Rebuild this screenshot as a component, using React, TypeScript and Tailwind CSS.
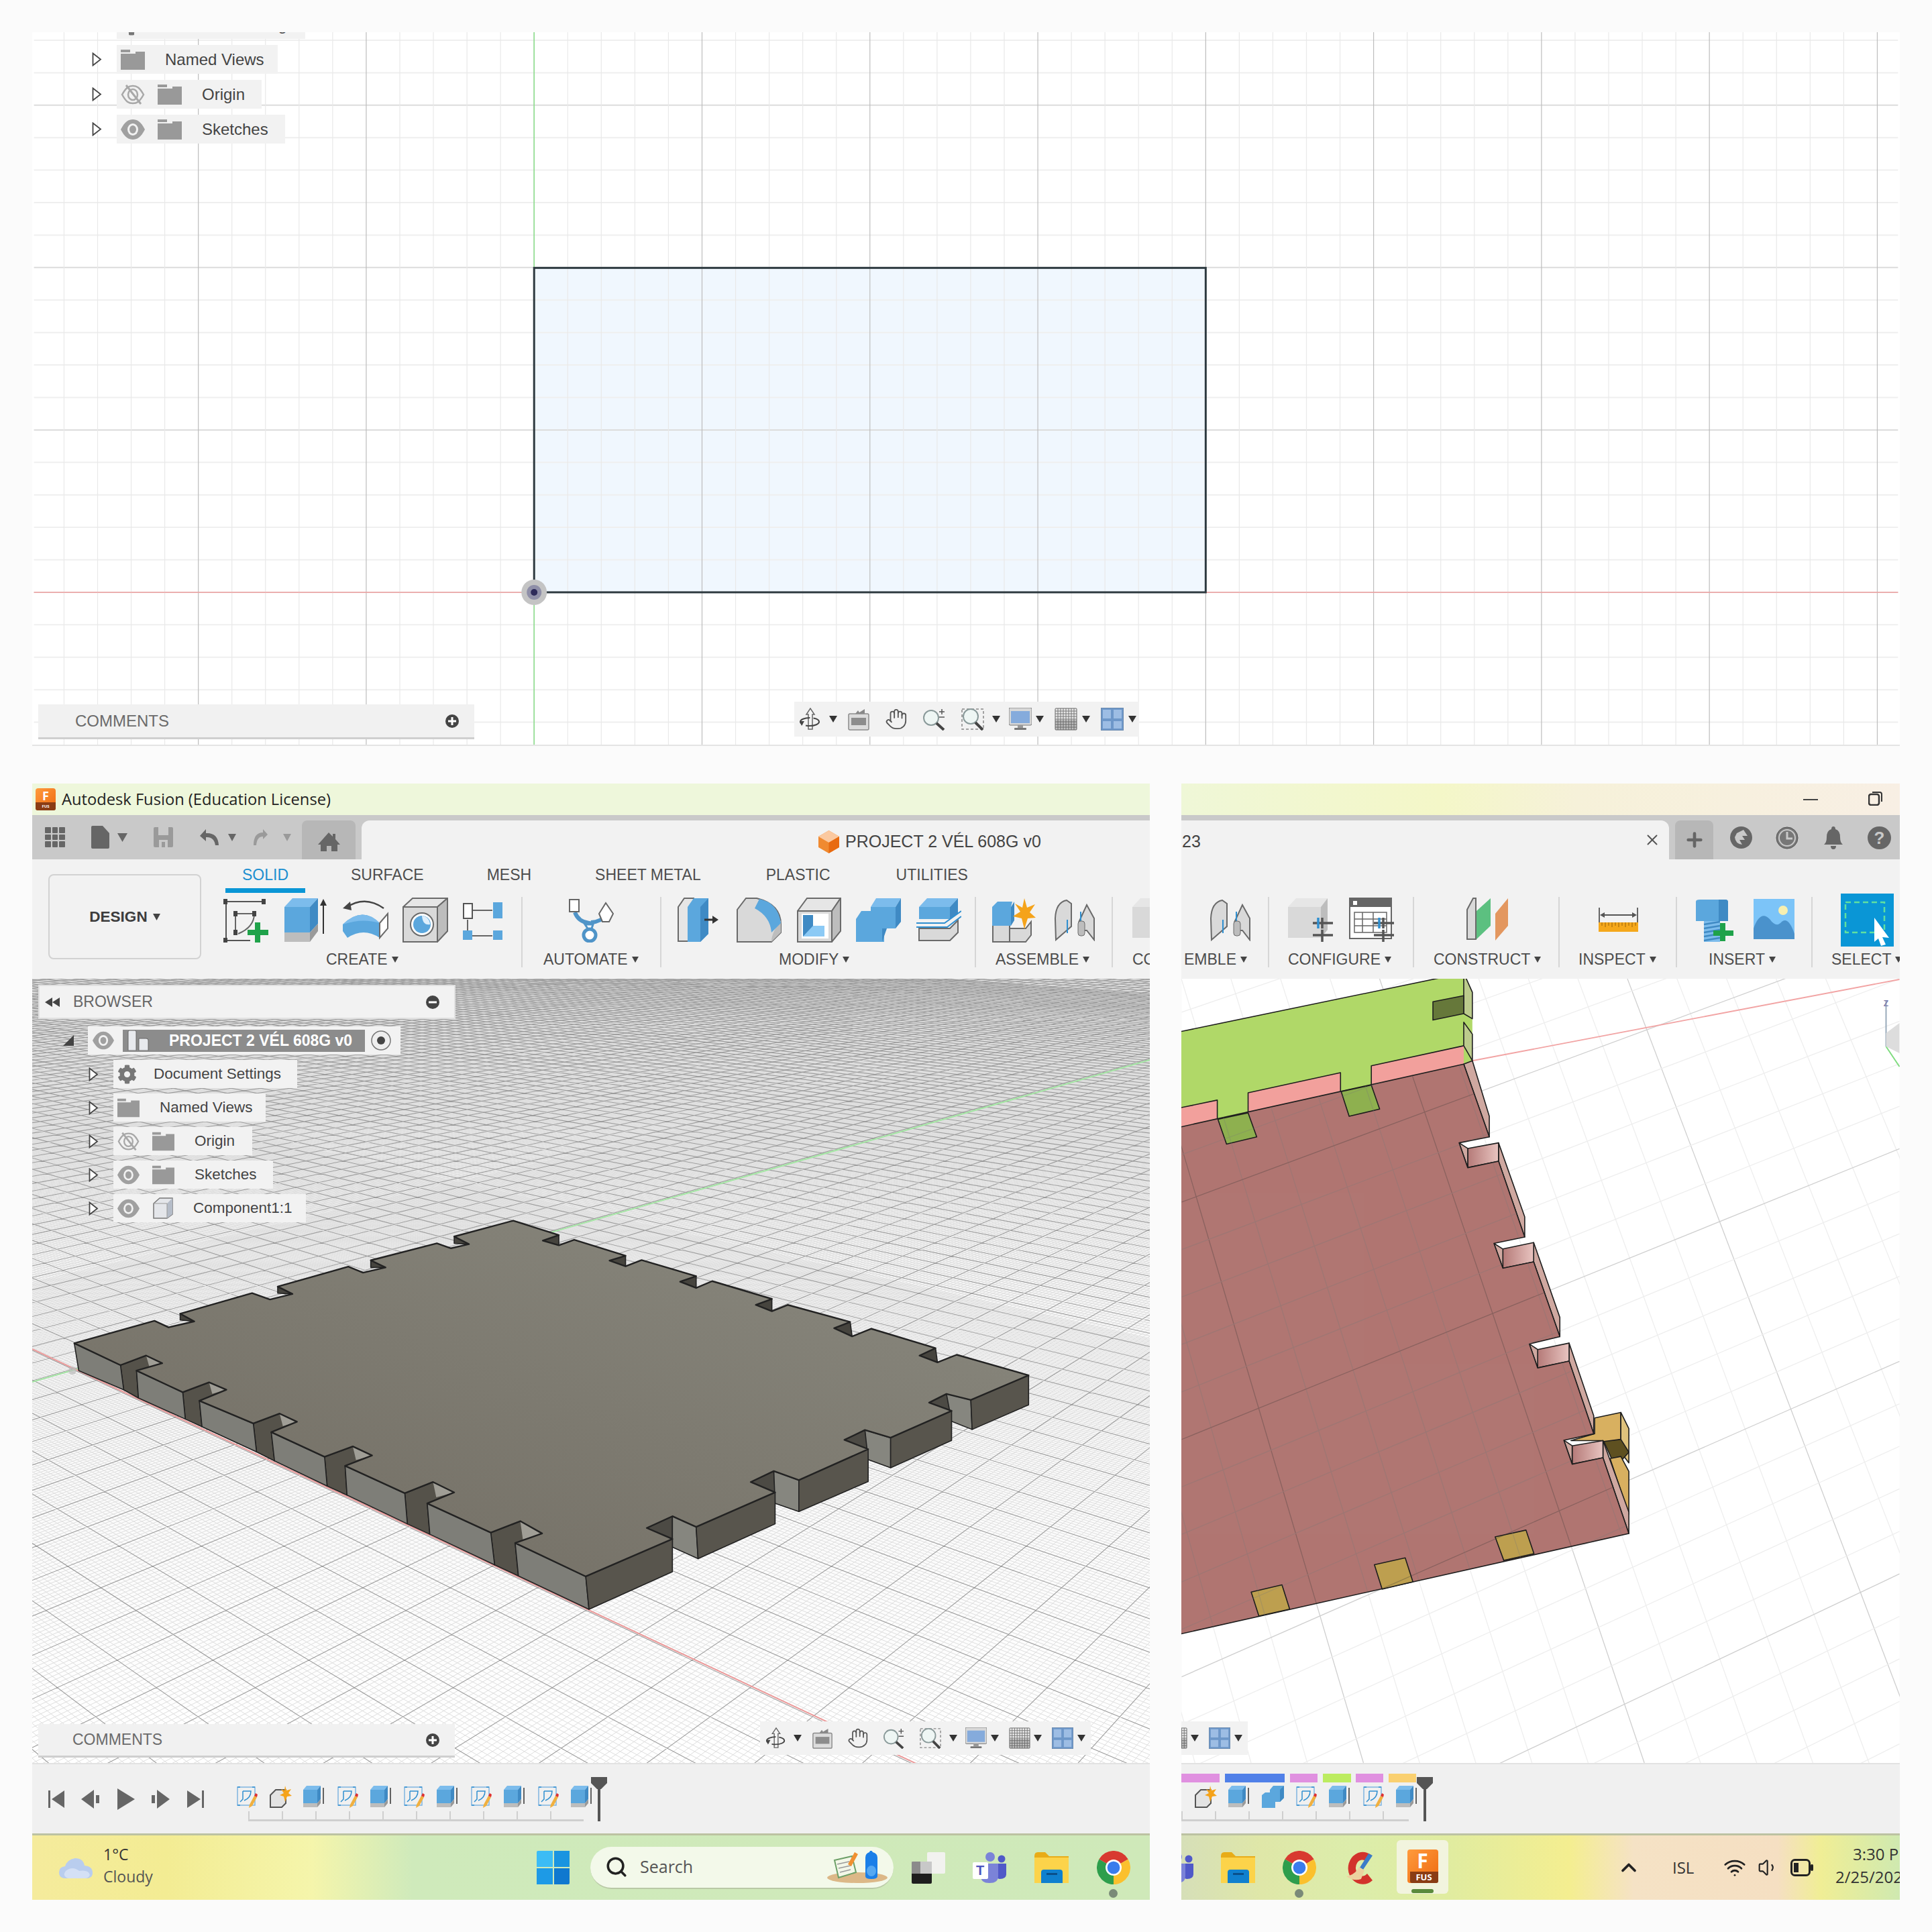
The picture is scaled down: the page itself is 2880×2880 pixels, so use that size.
import React from "react";
import { FaCog } from "react-icons/fa";
import { Hand, Search, ChevronUp, Wifi, Volume1, X, Plus } from "lucide-react";

type CP = { className?: string };
const Ic = ({ w, h, vb, className, children }: { w: number; h: number; vb?: string; className?: string; children?: React.ReactNode }) => (
  <svg width={w} height={h} viewBox={vb ?? `0 0 ${w} ${h}`} className={`shrink-0 ${className ?? ""}`}>{children}</svg>
);
const B1 = "#7cbcec", B2 = "#5ba7dd", B3 = "#3f8ac4", G1 = "#e6e6e6", G2 = "#d9d9d9", G3 = "#bdbdbd", L = "#6a6a6a";

const Caret = ({ w = 12, h = 10, c = "#333", className }: { w?: number; h?: number; c?: string; className?: string }) => (
  <svg width={w} height={h} viewBox="0 0 12 10" preserveAspectRatio="none" className={`shrink-0 ${className ?? ""}`}><path d="M0 0H12L6 10Z" fill={c} /></svg>
);

/* ---------- ribbon icons ---------- */
const SketchIc = () => (
  <Ic w={67} h={67}>
    <g stroke="#555" strokeWidth="2" fill="none">
      <path d="M3 6H60M4 6V64M4 64H40" />
      <path d="M18 24V50M18 24H46M46 24Q46 44 22 54" stroke="#666" />
    </g>
    <g fill="#444">
      <rect x="0" y="2" width="6" height="8" /><rect x="57" y="2" width="6" height="8" /><rect x="0" y="60" width="6" height="8" />
      <rect x="15" y="20" width="6" height="8" /><rect x="43" y="20" width="6" height="8" /><rect x="15" y="48" width="6" height="8" />
    </g>
    <path d="M47 37h8v11h12v8H55v11h-8V56H36v-8h11z" fill="#1fa24a" />
  </Ic>
);
const ExtrudeIc = () => (
  <Ic w={64} h={67}>
    <path d="M0 14 12 1H50L38 14Z" fill={B1} />
    <path d="M0 14H38V52H0Z" fill={B2} />
    <path d="M38 14 50 1V39L38 52Z" fill={B3} />
    <path d="M0 52H38V66H0Z" fill={G3} />
    <path d="M38 52 50 39V50L38 66Z" fill="#9a9a9a" />
    <path d="M58 6V54" stroke="#333" strokeWidth="2" />
    <path d="M58 2 53 12H63Z" fill="#333" />
  </Ic>
);
const RevolveIc = () => (
  <Ic w={69} h={67}>
    <path d="M6 15Q34 -4 62 16" stroke="#444" strokeWidth="2.5" fill="none" />
    <path d="M1 16 12 6 14 19Z" fill="#444" />
    <path d="M1 40Q30 12 56 38L56 60Q32 44 8 60L1 50Z" fill={B2} />
    <path d="M1 40Q30 30 56 38Q30 12 1 40Z" fill={B1} />
    <path d="M56 38 68 24V46L56 60Z" fill="#fff" stroke={L} strokeWidth="2" />
  </Ic>
);
const HoleIc = () => (
  <Ic w={68} h={67}>
    <path d="M1 14 15 1H67L52 14Z" fill={G1} stroke={L} strokeWidth="2" />
    <path d="M1 14H52V66H1Z" fill={G2} stroke={L} strokeWidth="2" />
    <path d="M52 14 67 1V50L52 66Z" fill={G3} stroke={L} strokeWidth="2" />
    <circle cx="29" cy="40" r="17" fill="#fff" stroke={L} strokeWidth="2" />
    <circle cx="29" cy="40" r="13" fill={B2} />
    <path d="M29 27A13 13 0 0 1 41 40Q30 42 29 27Z" fill="#dfeffb" />
  </Ic>
);
const PatternIc = () => (
  <Ic w={59} h={60}>
    <path d="M14 16H44M7 30V46M14 54H44" stroke="#666" strokeWidth="2" />
    <rect x="1" y="6" width="13" height="22" fill="#fff" stroke="#555" strokeWidth="2" />
    <rect x="45" y="4" width="14" height="24" fill={B2} />
    <rect x="0" y="46" width="14" height="14" fill={B2} />
    <rect x="45" y="46" width="14" height="14" fill={B2} />
  </Ic>
);
const AutomateIc = () => (
  <Ic w={67} h={67}>
    <path d="M9 22Q14 36 30 38L32 58M56 26Q48 36 33 37" stroke="#4f94c8" strokeWidth="6" fill="none" />
    <path d="M24 40L32 52 36 40Z" fill="#fff" stroke="#4f94c8" strokeWidth="3" />
    <rect x="1" y="3" width="14" height="18" fill="#fff" stroke="#666" strokeWidth="2" />
    <path d="M55 8 66 24 60 36H50L45 24Z" fill="#fff" stroke="#666" strokeWidth="2" />
    <circle cx="31" cy="56" r="9" fill="#fff" stroke="#4f94c8" strokeWidth="5" />
  </Ic>
);
const PressIc = () => (
  <Ic w={61} h={67}>
    <path d="M10 1 1 14V65H24V1Z" fill={G1} stroke={L} strokeWidth="2" />
    <path d="M15 14 24 1H46V54L34 66H15Z" fill={B2} />
    <path d="M34 66V14L46 1V54Z" fill={B3} />
    <path d="M40 33H56" stroke="#333" strokeWidth="3" />
    <path d="M61 33 52 27V39Z" fill="#333" />
  </Ic>
);
const FilletIc = () => (
  <Ic w={67} h={67}>
    <path d="M1 66V18L14 1H30Q66 10 66 40V52L52 66Z" fill={G2} stroke={L} strokeWidth="2" />
    <path d="M52 66Q52 52 66 34V52Z" fill={G3} />
    <path d="M27 16 34 2Q62 8 66 38L52 52Q50 28 27 16Z" fill={B2} />
  </Ic>
);
const ShellIc = () => (
  <Ic w={66} h={67}>
    <path d="M1 20 15 1H65L52 20Z" fill={G1} stroke={L} strokeWidth="2" />
    <path d="M1 20H52V66H1Z" fill={G2} stroke={L} strokeWidth="2" />
    <path d="M52 20 65 1V50L52 66Z" fill={G3} stroke={L} strokeWidth="2" />
    <rect x="7" y="24" width="40" height="37" fill="#fff" />
    <path d="M9 26H24V42H41V58H9Z" fill="#8ccaf5" />
    <path d="M9 26H24V42L9 58Z" fill={B3} />
  </Ic>
);
const CombineIc = () => (
  <Ic w={67} h={67}>
    <path d="M22 14 30 1H67L59 14Z" fill={B1} />
    <path d="M0 32 8 20H22V14H59V46H42V66H0Z" fill={B2} />
    <path d="M59 14 67 1V36L59 46ZM39 46H46L39 66Z" fill={B3} />
  </Ic>
);
const SplitIc = () => (
  <Ic w={67} h={67}>
    <path d="M4 14 16 1H62L50 14Z" fill={B1} />
    <path d="M4 14H50V32H4Z" fill={B2} />
    <path d="M50 14 62 1V24L50 32Z" fill={B3} />
    <path d="M4 46H50L62 34V52L50 64H4Z" fill={G2} stroke={L} strokeWidth="2" />
    <path d="M0 38H42L67 20M0 44H46L67 28" stroke="#2f8fd0" strokeWidth="2" fill="none" />
  </Ic>
);
const NewCompIc = () => (
  <Ic w={65} h={67}>
    <path d="M1 40H26V66H1Z" fill={G2} stroke={L} strokeWidth="2" />
    <path d="M26 46H50L58 36V56L50 66H26Z" fill={G2} stroke={L} strokeWidth="2" />
    <path d="M0 14 8 6H30L28 14V42H0Z" fill={B2} />
    <path d="M28 14 33 6V34L28 42Z" fill={B3} />
    <path d="M48 1 52 15 64 10 56 22 65 30 53 31 48 47 44 31 31 28 42 21 34 9 45 15Z" fill="#f5a31a" />
  </Ic>
);
const JointIc = () => (
  <Ic w={60} h={62}>
    <path d="M1 28Q2 4 18 1L25 6V40L2 60Z" fill={G2} stroke={L} strokeWidth="2" />
    <path d="M36 34 48 8 59 28V60L48 46H36Z" fill={G2} stroke={L} strokeWidth="2" />
    <path d="M19 30V50M39 18V40" stroke="#2f8fd0" strokeWidth="2" />
    <rect x="35" y="32" width="10" height="22" rx="4" fill={G3} stroke={L} />
  </Ic>
);
const Sliders = ({ x, y }: { x: number; y: number }) => (
  <g transform={`translate(${x} ${y})`}>
    <path d="M0 8H30M0 26H30M14 0V16M14 18V36" stroke="#555" strokeWidth="3.5" />
    <path d="M8 0V16" stroke="#2f8fd0" strokeWidth="3.5" />
  </g>
);
const CfgCubeIc = () => (
  <Ic w={67} h={67}>
    <path d="M0 14 12 1H59L49 14Z" fill={G1} />
    <path d="M0 14H49V60H0Z" fill={G2} />
    <path d="M49 14 59 1V48L49 60Z" fill={G3} />
    <Sliders x={37} y={30} />
  </Ic>
);
const TableIc = () => (
  <Ic w={67} h={67}>
    <rect x="1" y="1" width="62" height="60" fill="#fff" stroke="#666" strokeWidth="2" />
    <rect x="1" y="1" width="62" height="13" fill="#666" />
    <rect x="6" y="5" width="6" height="6" fill="#fff" />
    <path d="M8 22H56V52H8ZM8 32H56M8 42H56M20 22V52M36 22V52" stroke="#666" strokeWidth="1.5" fill="none" />
    <Sliders x={37} y={30} />
  </Ic>
);
const ConstructIc = () => (
  <Ic w={63} h={65}>
    <path d="M1 18 10 1H14V62H1Z" fill={G2} stroke={L} strokeWidth="2" />
    <path d="M15 62V20L36 1V42Z" fill="#5cc080" />
    <path d="M43 64V24L62 1V42Z" fill="#e3975f" />
  </Ic>
);
const InspectIc = () => (
  <Ic w={59} h={36}>
    <path d="M1 0V22M58 0V22" stroke="#666" strokeWidth="2" />
    <path d="M4 11H55" stroke="#555" strokeWidth="2" />
    <path d="M2 11 9 7V15ZM57 11 50 7V15Z" fill="#555" />
    <rect x="0" y="22" width="59" height="14" fill="#f5a81c" />
    <path d="M5 22v5M10 22v7M15 22v5M20 22v7M25 22v5M30 22v7M35 22v5M40 22v7M45 22v5M50 22v7M55 22v5" stroke="#b87a10" strokeWidth="1.5" />
  </Ic>
);
const BoltIc = () => (
  <Ic w={64} h={65}>
    <path d="M2 4Q2 1 8 1H46Q50 1 50 5V33H2Z" fill={B2} />
    <path d="M36 1H46Q50 1 50 5V33H36Z" fill={B3} />
    <path d="M14 33H38V64H14Z" fill={B1} />
    <path d="M14 38 38 34M14 44 38 40M14 50 38 46M14 56 38 52M14 62 38 58" stroke={B3} strokeWidth="2.5" />
    <path d="M34 38h8v11h12v8H42v8h-8v-8H24v-8h10z" fill="#1fa24a" transform="translate(4 -2)" />
  </Ic>
);
const ImageIc = () => (
  <Ic w={61} h={60}>
    <rect width="61" height="60" fill="#7cc4f8" />
    <circle cx="44" cy="17" r="7" fill="#f7efb0" />
    <path d="M0 60V44Q10 16 24 30 34 44 42 34 52 26 61 52V60Z" fill="#4a92cc" />
  </Ic>
);
const SelectIc = () => (
  <Ic w={79} h={79} className="-mt-[6px]">
    <rect width="79" height="79" fill="#0a96d6" />
    <rect x="7" y="13" width="58" height="45" fill="none" stroke="#5fe0a0" strokeWidth="2.5" strokeDasharray="8 5" />
    <path d="M50 36 72 66 62 65 67 76 60 78 56 67 50 72Z" fill="#fff" />
  </Ic>
);

/* ---------- viewport bar icons ---------- */
const OrbitIc = ({ s }: { s: number }) => (
  <Ic w={s} h={s} vb="0 0 34 34">
    <path d="M17 1 11 10H14V32H20V10H23Z" fill="#f4f4f4" stroke="#666" strokeWidth="1.5" />
    <ellipse cx="16" cy="21" rx="14" ry="6" fill="none" stroke="#444" strokeWidth="2" strokeDasharray="22 5" />
    <path d="M8 20 1 20 4 27Z" fill="#444" />
  </Ic>
);
const LookIc = ({ s }: { s: number }) => (
  <Ic w={s} h={s} vb="0 0 34 34">
    <path d="M4 9 12 9 16 4 18 7 26 2 26 9H31V33H3V9Z" fill="#888" />
    <rect x="2" y="9" width="30" height="24" rx="2" fill="#dcdcdc" stroke="#8a8a8a" strokeWidth="1.5" />
    <rect x="6" y="15" width="22" height="11" fill="#8c8c8c" />
  </Ic>
);
const ZoomIc = ({ s }: { s: number }) => (
  <Ic w={s} h={s} vb="0 0 34 34">
    <circle cx="13" cy="15" r="11" fill="#eef6f4" stroke="#8a9a9a" strokeWidth="2" />
    <path d="M21 23 32 33" stroke="#444" strokeWidth="4" />
    <path d="M25 6H33M29 2V10M25 14H33" stroke="#555" strokeWidth="1.5" />
  </Ic>
);
const FitIc = ({ s }: { s: number }) => (
  <Ic w={s} h={s} vb="0 0 34 34">
    <rect x="1" y="2" width="32" height="30" fill="none" stroke="#888" strokeWidth="1.5" strokeDasharray="4 3" />
    <circle cx="14" cy="13" r="11" fill="#eef6f4" stroke="#8a9a9a" strokeWidth="2" />
    <path d="M21 22 32 33" stroke="#444" strokeWidth="4" />
  </Ic>
);
const DisplayIc = ({ s }: { s: number }) => (
  <Ic w={s} h={s} vb="0 0 34 34">
    <rect x="0" y="0" width="34" height="26" rx="2" fill="#d8d8d8" stroke="#777" />
    <rect x="3" y="5" width="28" height="18" fill="#85abdc" />
    <rect x="13" y="26" width="8" height="4" fill="#999" />
    <rect x="8" y="30" width="18" height="3" rx="1" fill="#777" />
  </Ic>
);
const GridIc = ({ s }: { s: number }) => (
  <Ic w={s} h={s} vb="0 0 34 34">
    <rect x="1" y="1" width="32" height="32" rx="1" fill="#e8e8e8" stroke="#666" />
    <path d="M1 5H33M1 9H33M1 13H33M1 17H33M1 21H33M1 25H33M1 29H33M5 1V33M9 1V33M13 1V33M17 1V33M21 1V33M25 1V33M29 1V33" stroke="#777" strokeWidth="1" />
    <rect x="1" y="18" width="32" height="15" fill="#444" opacity=".25" />
  </Ic>
);
const ViewsIc = ({ s }: { s: number }) => (
  <Ic w={s} h={s} vb="0 0 34 34">
    <rect x="0.5" y="0.5" width="33" height="33" fill="#6d97c9" stroke="#6a8ab0" />
    <path d="M3 3H15V16H3ZM19 3H31V16H19ZM3 20H15V31H3ZM19 20H31V31H19Z" fill="#9dbde4" />
  </Ic>
);

function ViewBar({ big, className }: { big?: boolean; className?: string }) {
  const s = big ? 34 : 32;
  const m = big
    ? ["ml-[7px]", "ml-[11px]", "ml-[15px]", "ml-[22px]", "ml-[22px]", "ml-[24px]", "ml-[12px]", "ml-[13px]", "ml-[6px]", "ml-[16px]", "ml-[7px]", "ml-[16px]", "ml-[7px]"]
    : ["ml-[8px]", "ml-[10px]", "ml-[15px]", "ml-[21px]", "ml-[21px]", "ml-[23px]", "ml-[12px]", "ml-[12px]", "ml-[6px]", "ml-[15px]", "ml-[5px]", "ml-[15px]", "ml-[6px]"];
  return (
    <div className={`flex items-center bg-[#f2f2f2] ${big ? "w-[514px] h-[52px]" : "w-[493px] h-[50px]"} ${className ?? ""}`}>
      <span className={m[0]}><OrbitIc s={s} /></span>
      <Caret className={m[1]} />
      <span className={m[2]}><LookIc s={s} /></span>
      <Hand size={s} strokeWidth={1.3} color="#555" className={`shrink-0 ${m[3]}`} />
      <span className={m[4]}><ZoomIc s={s} /></span>
      <span className={m[5]}><FitIc s={s} /></span>
      <Caret className={m[6]} />
      <span className={m[7]}><DisplayIc s={s} /></span>
      <Caret className={m[8]} />
      <span className={m[9]}><GridIc s={s} /></span>
      <Caret className={m[10]} />
      <span className={m[11]}><ViewsIc s={s} /></span>
      <Caret className={m[12]} />
    </div>
  );
}

/* ---------- tree ---------- */
const Tri = () => (
  <svg width="15" height="21" viewBox="0 0 15 21" className="shrink-0"><path d="M1.5 1.5 13 10.5 1.5 19.5Z" fill="#fff" stroke="#444" strokeWidth="1.8" /></svg>
);
const Folder = ({ s }: { s: number }) => (
  <Ic w={s} h={s} vb="0 0 36 30"><path d="M0 0H14V4H0ZM0 6H22V3L36 3V30H0Z" fill="#999" /></Ic>
);
const Eye = ({ s }: { s: number }) => (
  <Ic w={s} h={s} vb="0 0 36 30">
    <path d="M0 15C6 3 12 0 18 0S30 3 36 15C30 27 24 30 18 30S6 27 0 15Z" fill="#a0a0a0" />
    <ellipse cx="18" cy="15" rx="8" ry="9" fill="#f2f2f2" /><ellipse cx="18" cy="15" rx="5" ry="6" fill="#a0a0a0" />
  </Ic>
);
const EyeOff = ({ s }: { s: number }) => (
  <Ic w={s} h={s} vb="0 0 36 30">
    <path d="M2 15C8 4 12 2 18 2S28 4 34 15C28 26 24 28 18 28S8 26 2 15Z" fill="none" stroke="#a8a8a8" strokeWidth="2.5" />
    <ellipse cx="18" cy="15" rx="7" ry="8" fill="none" stroke="#a8a8a8" strokeWidth="2.5" />
    <path d="M8 1 30 29" stroke="#a8a8a8" strokeWidth="3" />
  </Ic>
);
const CompBox = () => (
  <Ic w={30} h={32}>
    <path d="M1 9 10 1H29V25L21 31H1Z" fill="#e4e6ea" stroke="#777" strokeWidth="1.5" />
    <path d="M21 9 29 1V25L21 31Z" fill="#b5bcc8" />
    <path d="M1 9H21V31" fill="none" stroke="#999" />
  </Ic>
);

function TreeRow({ lg, eye, icon, text, pr }: { lg?: boolean; eye?: "on" | "off"; icon: "folder" | "gear" | "comp"; text: string; pr: string }) {
  const s = lg ? 36 : 33;
  return (
    <div className={`flex items-center ${lg ? "h-[43px]" : "h-[42px]"}`}>
      <div className="w-[37px]"><Tri /></div>
      <div className={`h-full flex items-center bg-[#f2f2f2] ${lg ? "pl-[6px] text-[24px]" : "pl-[6px] text-[22.5px]"} ${pr} text-[#444] leading-none`}>
        {eye === "on" && <Eye s={s} />}
        {eye === "off" && <EyeOff s={s} />}
        {icon === "folder" && <span className={eye ? "ml-[19px]" : ""}><Folder s={s} /></span>}
        {icon === "gear" && <FaCog size={lg ? 32 : 29} color="#777" className="shrink-0" />}
        {icon === "comp" && <span className="ml-[20px]"><CompBox /></span>}
        <span className={icon === "gear" ? "ml-[25px]" : "ml-[30px]"}>{text}</span>
      </div>
    </div>
  );
}

const RoundBtn = ({ plus }: { plus?: boolean }) => (
  <svg width="20" height="20" viewBox="0 0 20 20" className="shrink-0">
    <circle cx="10" cy="10" r="10" fill="#444" />
    <path d={plus ? "M4 10H16M10 4V16" : "M4 10H16"} stroke="#fff" strokeWidth="3" />
  </svg>
);

const CommentsBar = ({ wide }: { wide?: boolean }) => (
  <div className={`flex items-center justify-between bg-[#f1f1f1] border-b-[3px] border-[#cfcfcf] text-[#6b6b6b] ${wide ? "w-[650px] h-[52px] pl-[55px] pr-[23px] text-[24px]" : "w-[621px] h-[50px] pl-[51px] pr-[23px] text-[23px]"}`}>
    <span>COMMENTS</span>
    <RoundBtn plus />
  </div>
);

/* ---------- top panel ---------- */
function range(a: number, b: number) { const r: number[] = []; for (let i = a; i <= b; i++) r.push(i); return r; }
function TopGrid() {
  const vs = range(-15, 41);
  const hs = range(-17, 5);
  const Y = 884.5;
  return (
    <svg viewBox="48 48 2784 1064" className="absolute inset-0 w-full h-full">
      <rect x="795" y="400" width="1003" height="484.5" fill="#f0f7fe" />
      {hs.map((n) => <line key={n} x1="48" x2="2832" y1={Y + 48.5 * n} y2={Y + 48.5 * n} stroke={n % 5 === 0 ? "#dcdcdc" : "#efefef"} strokeWidth="2" />)}
      {vs.map((n) => <line key={n} y1="48" y2="1112" x1={795 + 50.15 * n} x2={795 + 50.15 * n} stroke={n % 5 === 0 ? "#bdbdbd" : "#e9e9e9"} strokeWidth="1.2" />)}
      <line x1="795" x2="795" y1="48" y2="1112" stroke="#8fe08f" strokeWidth="1.6" />
      <line x1="48" x2="2832" y1={Y} y2={Y} stroke="#f0a0a0" strokeWidth="1.6" />
      <rect x="795" y="400" width="1003" height="484.5" fill="none" stroke="#2e3a40" strokeWidth="3" />
      <circle cx="795" cy={Y} r="19" fill="#c4c4c4" />
      <circle cx="795" cy={Y} r="11" fill="#8f8fa8" />
      <circle cx="795" cy={Y} r="5" fill="#2d2a5a" />
    </svg>
  );
}
function TopPanel() {
  return (
    <div className="relative h-[1064px] shrink-0 bg-white overflow-hidden border-b-2 border-[#e4e4e4]">
      <TopGrid />
      <div className="absolute left-[89px] -top-[33px] flex flex-col gap-[9px]">
        <TreeRow lg icon="gear" text="Document Settings" pr="pr-[15px]" />
        <TreeRow lg icon="folder" text="Named Views" pr="pr-[20px]" />
        <TreeRow lg eye="off" icon="folder" text="Origin" pr="pr-[25px]" />
        <TreeRow lg eye="on" icon="folder" text="Sketches" pr="pr-[25px]" />
      </div>
      <div className="absolute left-[9px] top-[1002px]"><CommentsBar wide /></div>
      <div className="absolute left-[1136px] top-[998px]"><ViewBar big /></div>
    </div>
  );
}

/* ---------- perspective grid ---------- */
type Pt = [number, number];
function perspective(O: Pt, vp: Pt, other: Pt, k: number, tMin: number, tMax: number) {
  const L = Math.hypot(vp[0] - O[0], vp[1] - O[1]);
  const nMin = Math.floor((k * tMin) / (1 - tMin));
  const nMax = Math.ceil((k * tMax) / (1 - tMax));
  let minor = "", major = "";
  for (let n = nMin; n <= nMax; n++) {
    const t = n / (n + k);
    const sp = (L * k) / ((n + k) * (n + k));
    let step = 1;
    while (sp * step < 3) step *= 2;
    const isMaj = n % 10 === 0;
    if (!isMaj && n % step !== 0) continue;
    if (isMaj && sp * 10 < 6 && n % 20 !== 0) continue;
    const px = O[0] + (vp[0] - O[0]) * t, py = O[1] + (vp[1] - O[1]) * t;
    const ex = other[0] + (px - other[0]) * 8, ey = other[1] + (py - other[1]) * 8;
    const d = `M${other[0]} ${other[1]}L${ex.toFixed(1)} ${ey.toFixed(1)}`;
    if (isMaj) major += d; else minor += d;
  }
  return { minor, major };
}

const topFace = "737,97 808,150 783,170 808,187 832,167 912,225 887,243 912,264 937,241 1022,300 997,320 1022,343 1047,318 1140,383 1115,405 1140,428 1165,405 1262,467 1237,490 1265,520 1295,492 1395,563 1370,590 1398,615 1428,587 1540,662 1450,752 1412,730 1385,762 1420,792 1325,890 1285,862 1253,898 1290,932 1182,1045 1143,1012 1107,1052 1145,1090 1022,1216 985,1177 945,1220 985,1260 850,1397 740,1275 782,1240 748,1195 702,1237 603,1130 645,1090 612,1052 568,1093 475,993 517,955 487,922 443,960 360,870 400,832 373,802 332,838 248,755 290,715 263,688 222,724 150,645 190,618 165,590 125,625 53,545 178,463 200,487 240,465 218,437 330,362 358,385 393,365 370,338 480,265 503,287 538,268 515,242 618,180 640,198 668,183 645,155 737,97";
const llFaces = [
  "740,1275 850,1397 855,1517 745,1395", "603,1130 702,1237 708,1355 607,1243", "475,993 568,1093 572,1205 478,1100",
  "360,870 443,960 447,1067 365,975", "248,755 332,838 337,942 252,850", "150,645 222,724 226,822 153,745", "53,545 125,625 130,715 60,645",
];
const llNotch = [
  "125,625 165,590 190,618 150,645 153,745 130,715", "222,724 263,688 290,715 248,755 252,850 226,822", "332,838 373,802 400,832 360,870 365,975 337,942",
  "443,960 487,922 517,955 475,993 478,1100 447,1067", "568,1093 612,1052 645,1090 603,1130 607,1243 572,1205", "702,1237 748,1195 782,1240 740,1275 745,1395 708,1355",
];
const llTri = ["165,590 190,618 170,632", "263,688 290,715 268,730", "373,802 400,832 378,848", "487,922 517,955 492,972", "612,1052 645,1090 617,1108", "748,1195 782,1240 752,1262"];
const lrDark = ["850,1397 985,1260 985,1380 855,1517", "1022,1216 1145,1090 1145,1205 1025,1332", "1182,1045 1290,932 1290,1050 1182,1160", "1325,890 1420,792 1420,900 1325,1000", "1450,752 1540,662 1540,770 1452,860"];
const lrLit = ["985,1177 1022,1216 1025,1332 985,1290", "1143,1012 1182,1045 1182,1160 1145,1130", "1285,862 1325,890 1325,1000 1290,970", "1412,730 1450,752 1452,860 1420,830"];
const lrTri = ["945,1220 985,1177 985,1260", "1107,1052 1143,1012 1145,1090", "1253,898 1285,862 1290,932", "1385,762 1412,730 1420,792"];
const upTri = ["808,150 783,170 808,187", "912,225 887,243 912,264", "1022,300 997,320 1022,343", "1140,383 1115,405 1140,428", "1262,467 1237,490 1265,520", "1395,563 1370,590 1398,615", "218,437 218,460 240,465", "370,338 370,362 393,365", "515,242 515,268 538,268", "645,155 645,180 668,183"];

function LeftScene() {
  const O: Pt = [108, 2041];
  const VR: Pt = [-1576, 1250];
  const VG: Pt = [2851, 1250];
  const a = perspective(O, VG, VR, 480, -0.3, 0.78);
  const b = perspective(O, VR, VG, 480, -1, 0.7);
  const ns = { vectorEffect: "non-scaling-stroke" as const };
  return (
    <svg viewBox="48 1459 1666 1169" className="absolute inset-0 w-full h-full">
      <defs>
        <linearGradient id="lwash" x1="0" y1="0" x2="0" y2="1"><stop offset="0" stopColor="#cecece" /><stop offset=".12" stopColor="#e4e4e4" /><stop offset=".3" stopColor="#f6f6f6" /><stop offset="1" stopColor="#ffffff" /></linearGradient>
        <linearGradient id="ptop" x1="0" y1="1" x2="1" y2="0"><stop offset="0" stopColor="#716c62" /><stop offset="1" stopColor="#8a897f" /></linearGradient>
      </defs>
      <rect x="48" y="1459" width="1666" height="1169" fill="url(#lwash)" />
      <path d={a.minor + b.minor} stroke="#dedede" strokeWidth="1" fill="none" />
      <path d={a.major + b.major} stroke="#9c9c9c" strokeWidth="1.1" fill="none" />
      <line x1="48" y1="2060" x2="1714" y2="1580" stroke="#a4e6a4" strokeWidth="2" />
      <line x1="48" y1="2011" x2="1400" y2="2645" stroke="#eb9a9a" strokeWidth="2" />
      <circle cx="108" cy="2043" r="6" fill="#bbb" opacity=".7" />
      <g transform="translate(60 1780) scale(0.9567 0.408)" stroke="#222" strokeWidth="1.6" strokeLinejoin="round">
        {llNotch.map((p) => <polygon key={p} points={p} fill="#55524a" {...ns} />)}
        {llTri.map((p) => <polygon key={p} points={p} fill="#a09e96" stroke="none" />)}
        {llFaces.map((p) => <polygon key={p} points={p} fill="#7e7e78" {...ns} />)}
        {lrTri.map((p) => <polygon key={p} points={p} fill="#4c4a44" {...ns} />)}
        {lrLit.map((p) => <polygon key={p} points={p} fill="#86867f" {...ns} />)}
        {lrDark.map((p) => <polygon key={p} points={p} fill="#58554d" {...ns} />)}
        {upTri.map((p) => <polygon key={p} points={p} fill="#46443e" {...ns} />)}
        <polygon points={topFace} fill="url(#ptop)" strokeWidth="2.4" {...ns} />
      </g>
    </svg>
  );
}

/* right scene polygons */
const plate = "0,345 920,198 1003,368 905,382 933,440 1033,425 1118,602 1018,617 1047,675 1147,660 1232,835 1133,852 1160,908 1262,892 1342,1062 1245,1077 1272,1133 1372,1118 1456,1295 0,1530";
const strips = ["920,198 948,190 1003,320 1003,368", "1033,382 1118,555 1118,602 1033,425", "1147,615 1232,790 1232,835 1147,660", "1262,850 1342,1020 1342,1062 1262,892", "1372,1078 1456,1245 1456,1295 1372,1118"];
const walls = ["933,395 1033,382 1033,425 933,440", "1047,630 1147,615 1147,660 1047,675", "1160,865 1262,850 1262,892 1160,908", "1272,1090 1372,1078 1372,1118 1272,1133"];
const wallTri = ["905,382 933,395 933,440", "1018,617 1047,630 1047,675", "1133,852 1160,865 1160,908", "1245,1077 1272,1090 1272,1133"];
const ySq = ["230,1432 330,1415 355,1472 255,1488", "630,1368 730,1352 755,1408 655,1425", "1022,1303 1122,1287 1148,1342 1050,1358"];
const gSq = ["122,327 220,312 248,368 150,385", "522,262 620,247 647,303 548,320"];

function RightScene() {
  const fam1 = range(-12, 14).map((n) => {
    const px = 2007 + 83 * n, py = 2540, vx = -900, vy = -7300;
    const t = (1459 - vy) / (py - vy), t2 = (2628 - vy) / (py - vy);
    return { n, x1: vx + (px - vx) * t, y1: 1459, x2: vx + (px - vx) * t2, y2: 2628 };
  });
  const fam2 = range(-12, 22).map((n) => {
    const py = 1855 + 65.8 * n, px = 2480, vx = 12000, vy = -2000;
    const t = (1762 - vx) / (px - vx), t2 = (2832 - vx) / (px - vx);
    return { n, x1: 1762, y1: vy + (py - vy) * t, x2: 2832, y2: vy + (py - vy) * t2 };
  });
  const all = [...fam1, ...fam2];
  return (
    <svg viewBox="1762 1459 1070 1169" className="absolute inset-0 w-full h-full">
      <defs>
        <clipPath id="plateclip"><polygon points={plate} transform="translate(1760 1460) scale(.4592 .6378)" /></clipPath>
        <linearGradient id="wallg" x1="0" y1="0" x2="1" y2="0"><stop offset="0" stopColor="#b57a78" /><stop offset="1" stopColor="#e8c4c0" /></linearGradient>
      </defs>
      <rect x="1762" y="1459" width="1070" height="1169" fill="#fff" />
      {all.map((l, i) => <line key={i} x1={l.x1} y1={l.y1} x2={l.x2} y2={l.y2} stroke={l.n % 5 === 0 ? "#cfcfcf" : "#eeeeee"} strokeWidth="1.3" />)}
      <line x1="2186" y1="1583" x2="2832" y2="1460" stroke="#f2a4a4" strokeWidth="1.8" />
      <g transform="translate(1760 1460) scale(.4592 .6378)" stroke="#1e1e1e" strokeWidth="1.6" strokeLinejoin="round">
        <polygon points="0,122 920,-15 948,30 948,92 948,190 920,198 0,345" fill="#b0d868" stroke="none" />
        <path d="M0 122 920 -15" fill="none" vectorEffect="non-scaling-stroke" />
        <polygon points="920,-15 948,30 948,92 920,80" fill="#bccb8c" vectorEffect="non-scaling-stroke" />
        <polygon points="920,100 948,128 948,190 920,155" fill="#bccb8c" vectorEffect="non-scaling-stroke" />
        <polygon points="820,52 920,38 920,80 820,95" fill="#66783a" vectorEffect="non-scaling-stroke" />
        <polygon points="0,300 120,282 120,325 0,345" fill="#f2a09c" stroke="none" />
        <polygon points="220,265 520,218 520,262 220,312" fill="#f2a09c" stroke="none" />
        <polygon points="620,202 920,155 920,198 620,247" fill="#f2a09c" stroke="none" />
        <path d="M0 300 120 282V325M220 312V265L520 218V262M620 247V202L920 155" fill="none" vectorEffect="non-scaling-stroke" />
        <polygon points="1268,1078 1345,1062 1345,1025 1430,1012 1430,1075 1375,1085 1372,1078" fill="#d8b060" vectorEffect="non-scaling-stroke" />
        <polygon points="1430,1012 1456,1050 1456,1130 1430,1105" fill="#dfc27c" vectorEffect="non-scaling-stroke" />
        <polygon points="1375,1080 1430,1075 1456,1105 1425,1130 1400,1120" fill="#5e5020" vectorEffect="non-scaling-stroke" />
        <polygon points="1395,1120 1430,1115 1456,1150 1456,1250" fill="#d8b060" vectorEffect="non-scaling-stroke" />
        {strips.map((p) => <polygon key={p} points={p} fill="#cfa8a0" vectorEffect="non-scaling-stroke" />)}
        {walls.map((p) => <polygon key={p} points={p} fill="url(#wallg)" vectorEffect="non-scaling-stroke" />)}
        {wallTri.map((p) => <polygon key={p} points={p} fill="#cfa8a0" vectorEffect="non-scaling-stroke" />)}
        <polygon points={plate} fill="#b07672" vectorEffect="non-scaling-stroke" />
        {ySq.map((p) => <polygon key={p} points={p} fill="#bda050" vectorEffect="non-scaling-stroke" />)}
        {gSq.map((p) => <polygon key={p} points={p} fill="#8fb050" vectorEffect="non-scaling-stroke" />)}
      </g>
      <g clipPath="url(#plateclip)" opacity=".3">
        {all.map((l, i) => <line key={i} x1={l.x1} y1={l.y1} x2={l.x2} y2={l.y2} stroke={l.n % 5 === 0 ? "#333" : "#777"} strokeWidth="1.3" />)}
      </g>
      <path d="M2812 1492V1560" stroke="#9ab" strokeWidth="2" fill="none" />
      <path d="M2812 1560 2832 1590" stroke="#7fdc7f" strokeWidth="2" />
      <polygon points="2812,1540 2832,1525 2832,1570 2812,1560" fill="#ddd" />
      <text x="2808" y="1500" fontSize="16" fill="#77a">z</text>
    </svg>
  );
}

/* ---------- timeline ---------- */
const TLSketch = () => (
  <Ic w={32} h={33}>
    <rect x="2" y="2" width="26" height="27" fill="none" stroke="#7fb4e0" strokeWidth="1.5" />
    <path d="M2 2h4M24 2h4M2 29h4M10 8V20L6 24M10 8H22Q22 18 12 22" stroke="#2f8fd0" strokeWidth="1.5" fill="none" />
    <path d="M20 28 27 15 31 17 24 30 19 33Z" fill="#f0b040" />
    <path d="M27 15 29 11 32 13 31 17Z" fill="#e03030" />
  </Ic>
);
const TLComp = () => (
  <Ic w={33} h={33}>
    <path d="M1 14 9 6H24V26L18 32H1Z" fill="#e3e3e3" stroke="#555" strokeWidth="2" />
    <path d="M23 0 25 7 32 5 28 11 33 15 26 16 23 24 21 16 15 14 21 11 17 5 22 7Z" fill="#f5a31a" />
  </Ic>
);
const TLExtrude = () => (
  <Ic w={32} h={33}>
    <path d="M0 6 5 0H26L21 6Z" fill={B1} />
    <path d="M0 6H21V26H0Z" fill={B2} />
    <path d="M21 6 26 0V20L21 26Z" fill={B3} />
    <path d="M0 26H21V32H0Z" fill={G3} /><path d="M21 26 26 20V26L21 32Z" fill="#999" />
    <path d="M30 3V27" stroke="#333" strokeWidth="1.5" />
  </Ic>
);
const TLCombine = () => (
  <Ic w={33} h={33}>
    <path d="M12 6 17 0H33V18L27 24H20V33H0V14L5 10H12Z" fill={B2} />
    <path d="M27 6 33 0V18L27 24Z" fill={B3} />
  </Ic>
);
const Marker = ({ className }: CP) => (
  <Ic w={26} h={66} vb="0 0 26 66" className={className}>
    <path d="M1 0H25V9L16 18H10L1 9Z" fill="#555" />
    <rect x="11" y="14" width="4" height="52" fill="#555" />
  </Ic>
);
const Ruler = ({ cells, w, className }: { cells: number; w: string; className?: string }) => (
  <div className={`flex h-[15px] border-b-[3px] border-[#cfcfcf] ${w} ${className ?? ""}`}>
    {range(1, cells).map((i) => <div key={i} className="w-[50px] shrink-0 border-l-2 border-[#cfcfcf]" />)}
  </div>
);
function Controls() {
  return (
    <div className="flex items-center h-[32px] mt-[36px] ml-[24px] w-[280px] shrink-0">
      <svg width="24" height="26" viewBox="0 0 24 26" className="shrink-0"><path d="M0 0H3V26H0ZM24 0V26L5 13Z" fill="#666" /></svg>
      <svg width="28" height="28" viewBox="0 0 28 28" className="ml-[25px] shrink-0"><path d="M19 0V28L0 14ZM22 8H27V20H22Z" fill="#666" /></svg>
      <svg width="26" height="32" viewBox="0 0 26 32" className="ml-[26px] shrink-0"><path d="M0 0 26 16 0 32Z" fill="#666" /></svg>
      <svg width="28" height="28" viewBox="0 0 28 28" className="ml-[24px] shrink-0"><path d="M9 0V28L28 14ZM1 8H6V20H1Z" fill="#666" /></svg>
      <svg width="25" height="26" viewBox="0 0 25 26" className="ml-[26px] shrink-0"><path d="M22 0H25V26H22ZM0 0V26L20 13Z" fill="#666" /></svg>
    </div>
  );
}
function LeftTimeline() {
  const items = [TLSketch, TLComp, TLExtrude, TLSketch, TLExtrude, TLSketch, TLExtrude, TLSketch, TLExtrude, TLSketch, TLExtrude];
  return (
    <div className="h-[105px] shrink-0 bg-[#f0f0f0] border-t-2 border-[#e2e2e2] flex items-start">
      <Controls />
      <div className="mt-[32px] w-[530px] shrink-0">
        <div className="flex">{items.map((C, i) => <div key={i} className="w-[49.9px] shrink-0"><C /></div>)}</div>
        <Ruler cells={10} w="w-[500px]" className="ml-[18px] mt-[5px]" />
      </div>
      <Marker className="-ml-[2px] mt-[19px]" />
    </div>
  );
}
function RightTimeline() {
  const items = [TLComp, TLExtrude, TLCombine, TLSketch, TLExtrude, TLSketch, TLExtrude];
  return (
    <div className="h-[105px] shrink-0 bg-[#f0f0f0] border-t-2 border-[#e2e2e2] flex items-start">
      <div className="w-[350px] shrink-0 mt-[14px]">
        <div className="flex h-[13px]">
          <div className="w-[58px] bg-[#e090e0]" /><div className="w-[92px] ml-[8px] bg-[#5080e8]" /><div className="w-[42px] ml-[8px] bg-[#e090e0]" />
          <div className="w-[43px] ml-[8px] bg-[#bcec60]" /><div className="w-[42px] ml-[7px] bg-[#e090e0]" /><div className="w-[42px] ml-[8px] bg-[#fad070]" />
        </div>
        <div className="flex pl-[20px] mt-[5px]">{items.map((C, i) => <div key={i} className="w-[50px] shrink-0"><C /></div>)}</div>
        <Ruler cells={7} w="w-[339px]" className="mt-[5px]" />
      </div>
      <Marker className="mt-[19px]" />
    </div>
  );
}

/* ---------- taskbar icons ---------- */
const FusionIcon = ({ big }: { big?: boolean }) => (
  <div className={`relative shrink-0 rounded-[4px] bg-[linear-gradient(135deg,#ff9a3c,#ee6a10)] flex flex-col items-center font-bold text-white ${big ? "w-[46px] h-[50px]" : "w-[30px] h-[33px]"}`}>
    <span className={`leading-none ${big ? "text-[30px] mt-[2px]" : "text-[18px] mt-[2px]"}`}>F</span>
    <span className={`absolute bottom-0 right-0 flex items-center justify-center bg-[#8a3c14] rounded-b-[3px] ${big ? "w-[42px] h-[17px] text-[13px]" : "w-[30px] h-[12px] text-[6px]"}`}>FUS</span>
  </div>
);
const Explorer = () => (
  <Ic w={51} h={46}>
    <path d="M0 6Q0 0 5 0H16L22 6H51V46H0Z" fill="#e8ac18" /><path d="M0 8H51V46H0Z" fill="#fcd34a" />
    <path d="M10 46V30Q10 26 14 26H38Q42 26 42 30V46Z" fill="#0f80cf" /><rect x="18" y="31" width="16" height="3" fill="#0a4f8a" />
  </Ic>
);
const Chrome = () => (
  <div className="relative shrink-0 w-[50px] h-[50px]">
    <svg width="50" height="50" viewBox="0 0 48 48">
      <path d="M24 24 3.2 12A24 24 0 0 1 44.8 12Z" fill="#d83a30" />
      <path d="M24 24 44.8 12A24 24 0 0 1 24 48Z" fill="#fbc02d" />
      <path d="M24 24 24 48A24 24 0 0 1 3.2 12Z" fill="#2e9e4c" />
      <circle cx="24" cy="24" r="11.5" fill="#fff" /><circle cx="24" cy="24" r="9" fill="#3a7cec" />
    </svg>
    <div className="absolute left-[18px] top-[57px] w-[13px] h-[13px] rounded-full bg-[#7a8a78]" />
  </div>
);
const Teams = () => (
  <Ic w={50} h={46}>
    <circle cx="26" cy="7" r="7" fill="#7b83d8" /><circle cx="43" cy="10" r="5.5" fill="#5059c8" />
    <path d="M34 17H50V33Q50 40 40 40L34 38Z" fill="#5059c8" />
    <path d="M12 17H38V36Q38 46 25 46 12 46 12 36Z" fill="#7b83d8" />
    <rect x="0" y="15" width="23" height="25" rx="2" fill="#fff" />
    <text x="5" y="34" fontSize="20" fontWeight="bold" fill="#4b53bc" fontFamily="Liberation Sans">T</text>
  </Ic>
);
const TaskView = () => (
  <Ic w={50} h={47}>
    <rect x="23" y="0" width="27" height="32" rx="2" fill="#f2f2ef" />
    <rect x="0" y="14" width="30" height="33" rx="2" fill="#1e1e1e" />
    <rect x="13" y="14" width="17" height="18" fill="#c8c8c8" />
    <rect x="0" y="14" width="13" height="18" fill="#a6a6a6" opacity=".8" />
  </Ic>
);
const CCleaner = () => (
  <Ic w={51} h={50}>
    <path d="M40 6A22 24 0 1 0 42 44L34 34A10 12 0 1 1 33 16Z" fill="#d2332c" />
    <path d="M36 4 42 7 28 28 23 25Z" fill="#3a7cc8" />
    <path d="M22 24 30 29 25 42Q14 46 3 38 16 36 22 24Z" fill="#ecd2a0" />
  </Ic>
);
const WinLogo = () => (
  <div className="grid grid-cols-2 gap-[2px] w-[49px] h-[50px] shrink-0">
    <div className="bg-[#3cbcf5] rounded-tl-[2px]" /><div className="bg-[#1a94e0]" /><div className="bg-[#1d9ae6]" /><div className="bg-[#0f78cf] rounded-br-[2px]" />
  </div>
);
const Cloud = () => (
  <Ic w={50} h={31}>
    <path d="M10 31Q0 31 0 22 0 14 9 13 12 3 24 1 36 1 38 12 50 13 50 23 50 31 40 31Z" fill="#b9cdee" />
    <path d="M14 31Q4 28 10 20 20 12 30 20 44 18 46 26 44 31 38 31Z" fill="#d4e0f5" />
  </Ic>
);
const Decor = () => (
  <div className="relative shrink-0 w-[92px] h-[48px]">
    <Ic w={92} h={48} className="absolute inset-0">
      <ellipse cx="46" cy="40" rx="45" ry="8" fill="#dcb888" />
      <path d="M12 14 38 8 44 32 18 40Z" fill="#f3f7e8" stroke="#6da068" strokeWidth="2" />
      <path d="M16 20 34 16M18 26 36 22M20 32 36 28" stroke="#9a9a9a" strokeWidth="1.5" />
      <path d="M32 20 42 2 47 5 37 23Z" fill="#f09030" />
      <path d="M58 10Q58 4 64 2L66 -2 69 2Q76 4 76 10V38Q76 42 67 42 58 42 58 38Z" fill="#1a7fe8" />
      <ellipse cx="67" cy="30" rx="7" ry="8" fill="#55a8f2" />
    </Ic>
  </div>
);

function LeftTaskbar() {
  return (
    <div className="h-[99px] shrink-0 border-t-[3px] border-[#bcc2a2] flex items-center bg-[linear-gradient(90deg,#f5eb9c_0%,#f3ec93_12%,#f5f5ab_25%,#cfeabb_34%,#cfe9b9_100%)] font-['Open_Sans',sans-serif] text-[#333] overflow-hidden">
      <div className="ml-[40px]"><Cloud /></div>
      <div className="ml-[16px] -mt-[6px] w-[78px] flex flex-col text-[23px] leading-[33px] shrink-0">
        <span>1°C</span>
        <span className="text-[#555]">Cloudy</span>
      </div>
      <div className="ml-[568px]"><WinLogo /></div>
      <div className="ml-[31px] w-[452px] h-[63px] rounded-full bg-[#f3f9ea] border-b-2 border-[#b9c9a6] flex items-center shrink-0">
        <Search size={34} strokeWidth={2.5} color="#222" className="ml-[22px] shrink-0" />
        <span className="ml-[18px] text-[25px] text-[#555] flex-1">Search</span>
        <div className="mr-[8px]"><Decor /></div>
      </div>
      <div className="ml-[27px]"><TaskView /></div>
      <div className="ml-[41px]"><Teams /></div>
      <div className="ml-[42px]"><Explorer /></div>
      <div className="ml-[42px]"><Chrome /></div>
    </div>
  );
}
function RightTaskbar() {
  return (
    <div className="h-[99px] shrink-0 border-t-[3px] border-[#bcc2a2] flex items-center bg-[linear-gradient(90deg,#d6dfb8_0%,#dfe7a8_11%,#dcedab_24%,#e0eca0_37%,#f4ee90_54%,#f5e2c5_63%,#f5dfc2_83%,#f0ee95_89%,#cfe9b0_100%)] font-['Open_Sans',sans-serif] text-[#333] overflow-hidden">
      <div className="-ml-[32px]"><Teams /></div>
      <div className="ml-[41px]"><Explorer /></div>
      <div className="ml-[41px]"><Chrome /></div>
      <div className="ml-[42px]"><CCleaner /></div>
      <div className="relative ml-[27px] w-[77px] h-[80px] mt-[-2px] rounded-[6px] bg-[#f2f4de] flex justify-center pt-[14px] shrink-0">
        <FusionIcon big />
        <div className="absolute bottom-[1px] left-[22px] w-[33px] h-[6px] rounded-[3px] bg-[#5a8a3c]" />
      </div>
      <ChevronUp size={36} strokeWidth={2.5} color="#222" className="ml-[251px] shrink-0" />
      <span className="ml-[47px] text-[24px] w-[31px] shrink-0">ISL</span>
      <Wifi size={34} strokeWidth={2} color="#222" className="ml-[45px] shrink-0" />
      <Volume1 size={32} strokeWidth={1.6} color="#222" className="ml-[17px] shrink-0" />
      <svg width="34" height="26" viewBox="0 0 34 26" className="ml-[17px] shrink-0">
        <rect x="1.5" y="1.5" width="27" height="23" rx="5" fill="none" stroke="#222" strokeWidth="3" />
        <rect x="5" y="6" width="7" height="14" fill="#222" /><rect x="30" y="8" width="4" height="10" rx="2" fill="#222" />
      </svg>
      <div className="ml-[33px] -mt-[6px] w-[120px] shrink-0 flex flex-col items-start text-[24px] leading-[34px] whitespace-nowrap">
        <span className="ml-[26px]">3:30 PM</span>
        <span>2/25/2025</span>
      </div>
    </div>
  );
}

/* ---------- ribbon layout ---------- */
const RibLabel = ({ t, noCaret, className }: { t: string; noCaret?: boolean; className?: string }) => (
  <div className={`flex items-center gap-[6px] h-[30px] text-[23px] text-[#4d4d4d] whitespace-nowrap leading-none ${className ?? ""}`}>
    <span>{t}</span>{!noCaret && <Caret w={10} h={9} c="#444" />}
  </div>
);
const Sep = () => <div className="w-[2px] h-[105px] mt-[6px] bg-[#d6d6d6] shrink-0" />;
function Group({ w, label, labelMl, noCaret, children }: { w: string; label: string; labelMl: string; noCaret?: boolean; children: React.ReactNode }) {
  return (
    <div className={`${w} shrink-0`}>
      <div className="flex items-start h-[67px] mt-[7px]">{children}</div>
      <RibLabel t={label} noCaret={noCaret} className={`mt-[10px] ${labelMl}`} />
    </div>
  );
}
const Tab = ({ t, className }: { t: string; className?: string }) => (
  <div className={`text-[23px] text-[#4d4d4d] h-[50px] pt-[10px] leading-[26px] whitespace-nowrap ${className ?? ""}`}>{t}</div>
);

function LeftRibbon() {
  return (
    <div className="h-[178px] shrink-0 bg-[#f2f2f2] flex overflow-hidden">
      <div className="ml-[24px] mt-[22px] w-[228px] h-[127px] shrink-0 rounded-[8px] border-2 border-[#d2d2d2] flex items-center justify-center gap-[8px] text-[22.5px] font-bold text-[#3c3c3c]">
        <span>DESIGN</span><Caret w={11} h={10} c="#444" />
      </div>
      <div className="ml-[33px] flex flex-col">
        <div className="flex ml-[3px]">
          <div className="w-[119px] h-[50px] border-b-[7px] border-[#0a96d6] pt-[10px] text-center text-[23px] leading-[26px] text-[#1c8fd0]">SOLID</div>
          <Tab t="SURFACE" className="ml-[68px]" />
          <Tab t="MESH" className="ml-[94px]" />
          <Tab t="SHEET METAL" className="ml-[95px]" />
          <Tab t="PLASTIC" className="ml-[97px]" />
          <Tab t="UTILITIES" className="ml-[98px]" />
        </div>
        <div className="flex">
          <Group w="w-[444px]" label="CREATE" labelMl="ml-[153px]">
            <SketchIc /><span className="ml-[24px]"><ExtrudeIc /></span><span className="ml-[22px]"><RevolveIc /></span><span className="ml-[21px]"><HoleIc /></span><span className="ml-[22px] mt-[3px]"><PatternIc /></span>
          </Group>
          <Sep />
          <Group w="w-[205px]" label="AUTOMATE" labelMl="ml-[31px]">
            <span className="ml-[69px]"><AutomateIc /></span>
          </Group>
          <Sep />
          <Group w="w-[467px]" label="MODIFY" labelMl="ml-[175px]">
            <span className="ml-[24px]"><PressIc /></span><span className="ml-[27px]"><FilletIc /></span><span className="ml-[23px]"><ShellIc /></span><span className="ml-[22px]"><CombineIc /></span><span className="ml-[23px]"><SplitIc /></span>
          </Group>
          <Sep />
          <Group w="w-[202px]" label="ASSEMBLE" labelMl="ml-[29px]">
            <span className="ml-[24px]"><NewCompIc /></span><span className="ml-[28px] mt-[3px]"><JointIc /></span>
          </Group>
          <Sep />
          <Group w="w-[56px]" label="CO" noCaret labelMl="ml-[29px]">
            <span className="ml-[29px]"><CfgCubeIc /></span>
          </Group>
        </div>
      </div>
    </div>
  );
}
function RightRibbon() {
  return (
    <div className="h-[178px] shrink-0 bg-[#f2f2f2] flex pt-[50px] overflow-hidden">
      <Group w="w-[129px]" label="EMBLE" labelMl="ml-[4px]">
        <span className="ml-[43px] mt-[3px]"><JointIc /></span>
      </Group>
      <Sep />
      <Group w="w-[214px]" label="CONFIGURE" labelMl="ml-[28px]">
        <span className="ml-[28px]"><CfgCubeIc /></span><span className="ml-[24px]"><TableIc /></span>
      </Group>
      <Sep />
      <Group w="w-[215px]" label="CONSTRUCT" labelMl="ml-[29px]">
        <span className="ml-[78px]"><ConstructIc /></span>
      </Group>
      <Sep />
      <Group w="w-[173px]" label="INSPECT" labelMl="ml-[28px]">
        <span className="ml-[58px] mt-[15px]"><InspectIc /></span>
      </Group>
      <Sep />
      <Group w="w-[200px]" label="INSERT" labelMl="ml-[47px]">
        <span className="ml-[26px] mt-[2px]"><BoltIc /></span><span className="ml-[24px] mt-[2px]"><ImageIc /></span>
      </Group>
      <Sep />
      <Group w="w-[129px]" label="SELECT" labelMl="ml-[28px]">
        <span className="ml-[42px]"><SelectIc /></span>
      </Group>
    </div>
  );
}

/* ---------- chrome ---------- */
const GridBtn = () => (
  <div className="grid grid-cols-3 gap-[2px] w-[30px] h-[30px] shrink-0">{range(1, 9).map((i) => <div key={i} className="bg-[#666] rounded-[1px]" />)}</div>
);
function LeftChrome() {
  return (
    <div className="h-[66px] shrink-0 bg-[#c9c9c9] flex">
      <div className="w-[402px] shrink-0 flex items-center">
        <span className="ml-[19px]"><GridBtn /></span>
        <Ic w={27} h={34} className="ml-[39px]"><path d="M0 2Q0 0 2 0H17L27 11V32Q27 34 25 34H2Q0 34 0 32Z" fill="#666" /></Ic>
        <Caret w={15} h={13} c="#666" className="ml-[12px]" />
        <Ic w={29} h={30} className="ml-[39px]"><path d="M0 2Q0 0 2 0H27Q29 0 29 2V28Q29 30 27 30H2Q0 30 0 28Z" fill="#9a9a9a" /><path d="M7 0H22V12H7ZM8 19H21V30H8Z" fill="#c9c9c9" /><path d="M12 22H17V30H12Z" fill="#9a9a9a" /></Ic>
        <Ic w={30} h={26} className="ml-[39px]"><path d="M10 1 1 11 10 19V13Q22 12 24 25H29Q28 6 10 7Z" fill="#666" /></Ic>
        <Caret w={12} h={11} c="#666" className="ml-[13px]" />
        <Ic w={22} h={26} className="ml-[26px]"><path d="M14 1 21 9 14 16V12Q5 12 4 25H0Q0 6 14 6Z" fill="#9a9a9a" /></Ic>
        <Caret w={12} h={11} c="#9a9a9a" className="ml-[22px]" />
      </div>
      <div className="w-[80px] h-[58px] mt-[8px] shrink-0 bg-[#b7b7b7] rounded-t-[8px] flex justify-center pt-[18px]">
        <Ic w={33} h={28}><path d="M16 0 22 6V2H26V10L33 18H29V28H20V20H13V28H4V18H0Z" fill="#666" /></Ic>
      </div>
      <div className="ml-[9px] flex-1 h-[58px] mt-[8px] bg-[#f2f2f2] rounded-tl-[12px] flex items-center pl-[681px] pt-[6px]">
        <Ic w={31} h={34}><path d="M15.5 0 31 9V25L15.5 34 0 25V9Z" fill="#f08a30" /><path d="M15.5 0 31 9 15.5 18 0 9Z" fill="#fbc9a0" /><path d="M15.5 18 31 9V25L15.5 34Z" fill="#e86a10" /></Ic>
        <span className="ml-[9px] text-[25px] text-[#444] whitespace-nowrap">PROJECT 2 VÉL 608G v0</span>
      </div>
    </div>
  );
}
function RightChrome() {
  return (
    <div className="h-[66px] shrink-0 bg-[#c9c9c9] flex">
      <div className="w-[727px] h-[58px] mt-[8px] shrink-0 bg-[#f2f2f2] rounded-tr-[12px] flex items-center overflow-hidden pt-[6px]">
        <span className="ml-[1px] text-[25px] text-[#444] flex-1">23</span>
        <X size={26} strokeWidth={1.8} color="#555" className="mr-[12px] shrink-0 -mt-[6px]" />
      </div>
      <div className="ml-[9px] w-[57px] h-[58px] mt-[8px] shrink-0 bg-[#b7b7b7] rounded-t-[8px] flex items-center justify-center">
        <Plus size={32} strokeWidth={3.5} color="#666" />
      </div>
      <svg width="33" height="33" viewBox="0 0 33 33" className="ml-[25px] mt-[17px] shrink-0"><circle cx="16.5" cy="16.5" r="16.5" fill="#666" /><path d="M10 10 20 5 26 14 18 14 22 20 14 20 18 27Q8 26 7 16Z" fill="#c9c9c9" /></svg>
      <svg width="34" height="34" viewBox="0 0 34 34" className="ml-[35px] mt-[17px] shrink-0"><circle cx="17" cy="17" r="16" fill="#777" stroke="#555" /><circle cx="17" cy="17" r="12" fill="none" stroke="#c9c9c9" strokeWidth="2" /><path d="M17 8V18H25" fill="none" stroke="#c9c9c9" strokeWidth="3" /></svg>
      <svg width="28" height="34" viewBox="0 0 28 34" className="ml-[38px] mt-[17px] shrink-0"><path d="M14 0Q17 0 17 4 24 6 24 16 24 24 28 27H0Q4 24 4 16 4 6 11 4 11 0 14 0ZM10 29H18Q18 34 14 34 10 34 10 29Z" fill="#666" /></svg>
      <div className="ml-[37px] mt-[17px] w-[35px] h-[34px] shrink-0 rounded-full bg-[#666] flex items-center justify-center text-[#c9c9c9] font-bold text-[26px] leading-none">?</div>
    </div>
  );
}

function LeftWindow() {
  return (
    <div className="w-[1666px] shrink-0 flex flex-col overflow-hidden">
      <div className="h-[47px] shrink-0 bg-[#eef7db] flex items-center font-['Open_Sans',sans-serif]">
        <span className="ml-[5px]"><FusionIcon /></span>
        <span className="ml-[9px] text-[23.7px] text-[#222] whitespace-nowrap">Autodesk Fusion (Education License)</span>
      </div>
      <LeftChrome />
      <LeftRibbon />
      <div className="relative h-[1169px] shrink-0 overflow-hidden">
        <LeftScene />
        <div className="absolute left-[9px] top-[9px] w-[622px] h-[51px] flex items-center bg-[#f2f2f2] border-2 border-[#e0e0e0] text-[23px] text-[#666]">
          <svg width="22" height="14" viewBox="0 0 22 14" className="ml-[8px] shrink-0"><path d="M11 0V14L0 7ZM22 0V14L11 7Z" fill="#444" /></svg>
          <span className="ml-[20px] flex-1">BROWSER</span>
          <span className="mr-[22px]"><RoundBtn /></span>
        </div>
        <div className="absolute left-[46px] top-[71px] w-[503px] h-[42px] flex items-center">
          <svg width="16" height="16" viewBox="0 0 16 16" className="shrink-0"><path d="M16 0V16H0Z" fill="#444" /></svg>
          <div className="ml-[21px] h-full flex-1 flex items-center bg-[#f2f2f2] pl-[7px] pr-[14px]">
            <Eye s={32} />
            <div className="ml-[13px] h-[33px] w-[361px] shrink-0 flex items-center bg-[#8c8c8c] text-white font-bold text-[23px] whitespace-nowrap">
              <Ic w={32} h={30} className="ml-[7px]"><path d="M1 2Q1 0 3 0H11Q13 0 13 2V30H1ZM17 12H28Q31 12 31 15V30H17Z" fill="#e8eaee" stroke="#666" /></Ic>
              <span className="ml-[30px]">PROJECT 2 VÉL 608G v0</span>
            </div>
            <svg width="30" height="30" viewBox="0 0 30 30" className="ml-[9px] shrink-0"><circle cx="15" cy="15" r="14" fill="#eee" stroke="#777" strokeWidth="1.5" /><circle cx="15" cy="15" r="6" fill="#444" /></svg>
          </div>
        </div>
        <div className="absolute left-[84px] top-[121px] flex flex-col gap-[8px]">
          <TreeRow icon="gear" text="Document Settings" pr="pr-[24px]" />
          <TreeRow icon="folder" text="Named Views" pr="pr-[20px]" />
          <TreeRow eye="off" icon="folder" text="Origin" pr="pr-[26px]" />
          <TreeRow eye="on" icon="folder" text="Sketches" pr="pr-[24px]" />
          <TreeRow eye="on" icon="comp" text="Component1:1" pr="pr-[20px]" />
        </div>
        <div className="absolute left-[9px] top-[1111px]"><CommentsBar /></div>
        <div className="absolute left-[1085px] top-[1107px]"><ViewBar /></div>
      </div>
      <LeftTimeline />
      <LeftTaskbar />
    </div>
  );
}
function RightWindow() {
  return (
    <div className="w-[1071px] shrink-0 flex flex-col overflow-hidden">
      <div className="h-[47px] shrink-0 bg-[linear-gradient(90deg,#eff7d7_0%,#f4f7c8_36%,#f6f1d9_55%,#f8efe4_100%)] flex items-center">
        <div className="ml-[927px] w-[22px] h-[2px] bg-[#444] shrink-0" />
        <svg width="22" height="22" viewBox="0 0 22 22" className="ml-[75px] -mt-[4px] shrink-0"><rect x="1" y="5" width="15" height="16" rx="3" fill="none" stroke="#333" strokeWidth="2.5" /><path d="M6 2H17Q20 2 20 5V16" fill="none" stroke="#333" strokeWidth="2" /></svg>
      </div>
      <RightChrome />
      <RightRibbon />
      <div className="relative h-[1169px] shrink-0 overflow-hidden">
        <RightScene />
        <div className="absolute -left-[394px] top-[1107px]"><ViewBar /></div>
      </div>
      <RightTimeline />
      <RightTaskbar />
    </div>
  );
}

export default function App() {
  return (
    <div className="w-[2880px] h-[2880px] bg-[#fbfbfb] pt-[48px] px-[48px] flex flex-col overflow-hidden font-['Liberation_Sans',sans-serif]">
      <TopPanel />
      <div className="mt-[56px] flex gap-[47px] h-[1664px] shrink-0">
        <LeftWindow />
        <RightWindow />
      </div>
    </div>
  );
}
